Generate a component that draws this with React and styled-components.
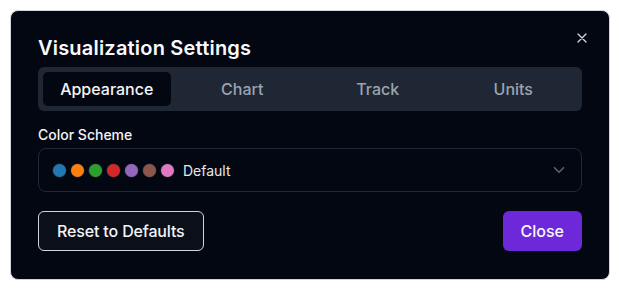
import React, { useState } from "react";
import styled, { createGlobalStyle } from "styled-components";

const Global = createGlobalStyle`
  * { box-sizing: border-box; }
  html, body { margin: 0; padding: 0; background: #ffffff; }
  body { font-family: Inter, "Noto Sans", sans-serif; -webkit-font-smoothing: antialiased; }
  #root { padding: 10px; }
`;

const Dialog = styled.div`
  position: relative;
  width: 600px;
  background: #030712;
  border: 1px solid #d1d5db;
  border-radius: 8px;
  padding: 23px 27px 28px;
  display: flex;
  flex-direction: column;
  color: #f9fafb;
`;

const Title = styled.h2`
  margin: 0;
  font-size: 20px;
  line-height: 28px;
  font-weight: 600;
  letter-spacing: 0.2px;
  color: #f9fafb;
`;

const CloseX = styled.button`
  position: absolute;
  top: 19px;
  right: 19px;
  width: 16px;
  height: 16px;
  padding: 0;
  border: none;
  background: transparent;
  color: #d1d5db;
  display: flex;
  align-items: center;
  justify-content: center;
  cursor: pointer;
`;

const TabList = styled.div`
  margin-top: 5px;
  height: 44px;
  padding: 5px;
  border-radius: 6px;
  background: #1f2734;
  display: grid;
  grid-template-columns: repeat(4, 1fr);
  gap: 8px;
`;

const Tab = styled.button`
  border: none;
  border-radius: 5px;
  font-family: inherit;
  font-size: 16px;
  font-weight: 500;
  background: ${(p) => (p.$active ? "#030712" : "transparent")};
  color: ${(p) => (p.$active ? "#f3f4f6" : "#9ca3af")};
  cursor: pointer;
  padding: 0;
`;

const Label = styled.div`
  margin-top: 14px;
  font-size: 14px;
  line-height: 20px;
  font-weight: 500;
  color: #f3f4f6;
`;

const Select = styled.div`
  margin-top: 3px;
  height: 44px;
  border: 1px solid #1f2937;
  border-radius: 8px;
  display: flex;
  align-items: center;
  padding: 0 13px 0 14px;
  gap: 9px;
`;

const Dots = styled.div`
  display: flex;
  gap: 5px;
`;

const Dot = styled.span`
  width: 13px;
  height: 13px;
  border-radius: 50%;
  background: ${(p) => p.$c};
  box-shadow: 0 0 0 0.5px rgba(255,255,255,0.15);
`;

const SelectText = styled.span`
  flex: 1;
  font-size: 14px;
  color: #e5e7eb;
`;

const Chevron = styled.svg`
  opacity: 0.6;
`;

const Footer = styled.div`
  margin-top: 19px;
  display: flex;
  justify-content: space-between;
`;

const OutlineButton = styled.button`
  height: 40px;
  padding: 0 18px;
  border: 1px solid #d1d5db;
  border-radius: 6px;
  background: #0a0f1a;
  color: #f3f4f6;
  font-family: inherit;
  font-size: 16px;
  font-weight: 500;
  letter-spacing: -0.15px;
  cursor: pointer;
`;

const PrimaryButton = styled.button`
  height: 40px;
  padding: 0 18px;
  border: none;
  border-radius: 6px;
  background: #6d28d9;
  color: #f9fafb;
  font-family: inherit;
  font-size: 16px;
  font-weight: 500;
  cursor: pointer;
`;

const colors = ["#1f77b4", "#ff7f0e", "#2ca02c", "#d62728", "#9467bd", "#8c564b", "#e377c2"];
const tabs = ["Appearance", "Chart", "Track", "Units"];

export default function App() {
  const [active, setActive] = useState("Appearance");
  return (
    <>
      <Global />
      <Dialog>
        <Title>Visualization Settings</Title>
        <CloseX aria-label="Close">
          <svg width="16" height="16" viewBox="0 0 24 24" fill="none" stroke="currentColor" strokeWidth="2" strokeLinecap="round">
            <path d="M18 6 6 18M6 6l12 12" />
          </svg>
        </CloseX>
        <TabList>
          {tabs.map((t) => (
            <Tab key={t} $active={t === active} onClick={() => setActive(t)}>
              {t}
            </Tab>
          ))}
        </TabList>
        <Label>Color Scheme</Label>
        <Select>
          <Dots>
            {colors.map((c) => (
              <Dot key={c} $c={c} />
            ))}
          </Dots>
          <SelectText>Default</SelectText>
          <Chevron width="18" height="18" viewBox="0 0 24 24" fill="none" stroke="#9ca3af" strokeWidth="2" strokeLinecap="round" strokeLinejoin="round">
            <path d="m6 9 6 6 6-6" />
          </Chevron>
        </Select>
        <Footer>
          <OutlineButton>Reset to Defaults</OutlineButton>
          <PrimaryButton>Close</PrimaryButton>
        </Footer>
      </Dialog>
    </>
  );
}
